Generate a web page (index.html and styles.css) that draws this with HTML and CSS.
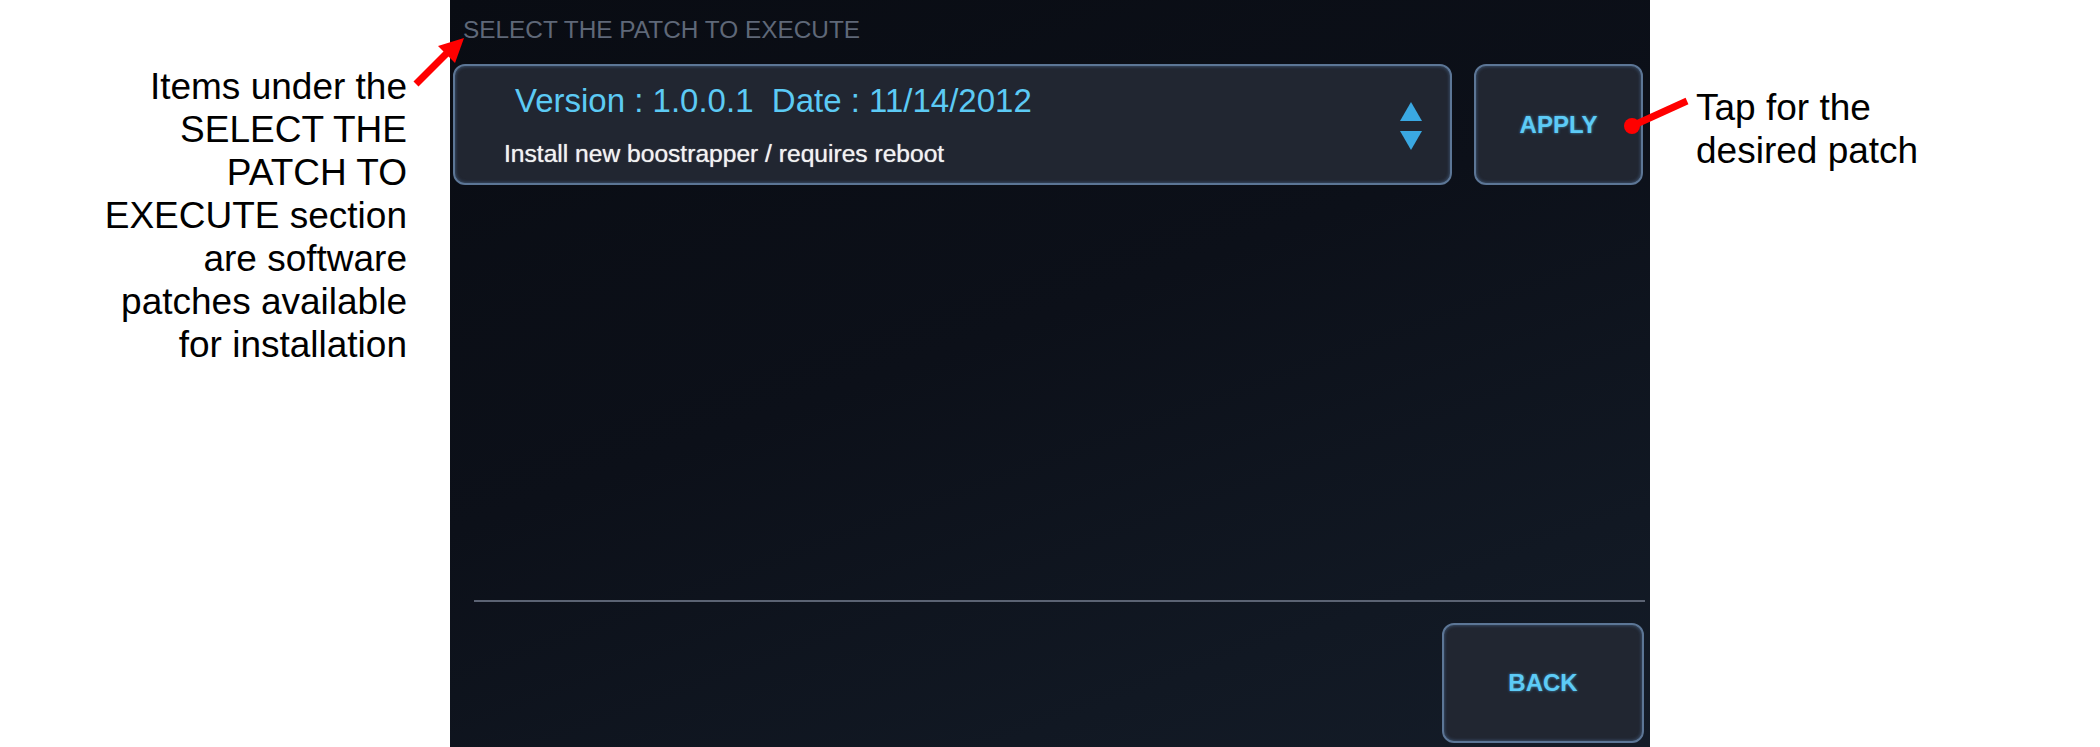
FILE: index.html
```html
<!DOCTYPE html>
<html>
<head>
<meta charset="utf-8">
<title>Select patch</title>
<link rel="stylesheet" href="styles.css">
</head>
<body>
<div class="page">
  <div class="note note-left">Items under the<br>SELECT THE<br>PATCH TO<br>EXECUTE section<br>are software<br>patches available<br>for installation</div>
  <div class="panel">
    <div class="section-label">SELECT THE PATCH TO EXECUTE</div>
    <div class="patch-row">
      <div class="patch-box">
        <div class="patch-text">
          <div class="patch-version">Version : 1.0.0.1&nbsp;&nbsp;Date : 11/14/2012</div>
          <div class="patch-desc">Install new boostrapper / requires reboot</div>
        </div>
        <svg class="spinner" width="22" height="49" viewBox="0 0 22 49">
          <polygon points="11,0 22,19 0,19" fill="#3aa8e2"/>
          <polygon points="0,29 22,29 11,48" fill="#3aa8e2"/>
        </svg>
      </div>
      <div class="btn btn-apply">APPLY</div>
    </div>
    <div class="footer">
      <div class="separator"></div>
      <div class="footer-row">
        <div class="btn btn-back">BACK</div>
      </div>
    </div>
  </div>
  <div class="note note-right">Tap for the<br>desired patch</div>
  <svg class="callouts" width="2100" height="747" viewBox="0 0 2100 747">
    <line x1="416" y1="84" x2="448" y2="52" stroke="#ff0000" stroke-width="7"/>
    <polygon points="464,38 455,63 438,46" fill="#ff0000"/>
    <line x1="1632" y1="126" x2="1687" y2="101" stroke="#ff0000" stroke-width="7"/>
    <circle cx="1632" cy="126" r="8" fill="#ff0000"/>
  </svg>
</div>
</body>
</html>
```

FILE: styles.css
```css
html, body {
  margin: 0;
  padding: 0;
  background: #ffffff;
}

.page {
  position: relative;
  display: flex;
  width: 2100px;
  height: 747px;
  overflow: hidden;
  font-family: "Liberation Sans", Arial, sans-serif;
}

.note {
  font-size: 37px;
  line-height: 43px;
  color: #000000;
}

.note-left {
  width: 450px;
  box-sizing: border-box;
  padding: 65px 43px 0 0;
  text-align: right;
}

.note-right {
  padding: 86px 0 0 46px;
}

.panel {
  width: 1200px;
  height: 747px;
  box-sizing: border-box;
  display: flex;
  flex-direction: column;
  padding: 16px 7px 4px 3px;
  background: linear-gradient(160deg, #090c13 0%, #0c1019 45%, #111823 80%, #141c28 100%);
}

.section-label {
  margin-left: 10px;
  font-size: 24.4px;
  line-height: 28px;
  color: #5f6878;
}

.patch-row {
  display: flex;
  gap: 22px;
  margin-top: 20px;
  height: 121px;
}

.patch-box,
.btn {
  box-sizing: border-box;
  border: 2px solid #5c7696;
  border-radius: 12px;
  background: #212631;
  box-shadow: inset 0 0 3px 1px rgba(58, 78, 104, 0.9);
}

.patch-box {
  width: 999px;
  height: 121px;
  display: flex;
  align-items: center;
  padding: 0 28px 0 49px;
}

.patch-text {
  flex: 1;
  align-self: flex-start;
  padding-top: 16px;
}

.patch-version {
  margin-left: 11px;
  font-size: 33px;
  line-height: 37px;
  color: #5ccaf4;
}

.patch-desc {
  margin-top: 21px;
  font-size: 24.6px;
  line-height: 28px;
  color: #f2f2f2;
  text-shadow: 0 0 1px rgba(255, 255, 255, 0.8);
}

.spinner {
  display: block;
  margin-top: 3px;
}

.btn {
  display: flex;
  align-items: center;
  justify-content: center;
  font-size: 24px;
  font-weight: bold;
  color: #5dcbf6;
  text-shadow: 0 0 3px rgba(80, 190, 245, 0.7);
}

.btn-apply {
  width: 169px;
  height: 121px;
}

.footer {
  margin-top: auto;
  margin-right: -3px;
}

.separator {
  height: 2px;
  margin: 0 1px 21px 21px;
  background: #5b6373;
}

.footer-row {
  display: flex;
  justify-content: flex-end;
  padding-right: 2px;
}

.btn-back {
  width: 202px;
  height: 120px;
}

.callouts {
  position: absolute;
  left: 0;
  top: 0;
  pointer-events: none;
}
```
